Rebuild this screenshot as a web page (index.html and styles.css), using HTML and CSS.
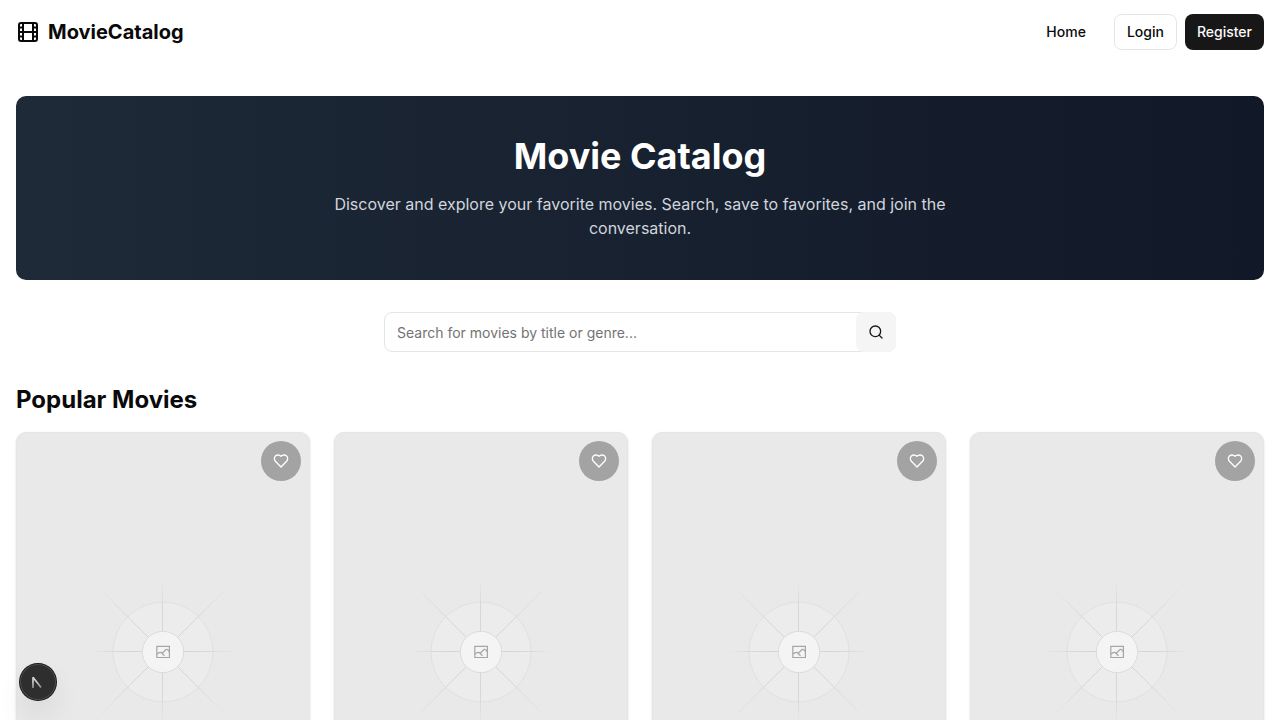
FILE: index.html
```
<!DOCTYPE html>
<html lang="en">
<head>
<meta charset="utf-8">
<meta name="viewport" content="width=device-width, initial-scale=1">
<title>MovieCatalog</title>
<link rel="stylesheet" href="styles.css">
</head>
<body>
<svg class="defs" width="0" height="0" aria-hidden="true">
  <defs>
    <radialGradient id="ray" gradientUnits="userSpaceOnUse" cx="80" cy="80" r="100">
      <stop offset="0" stop-color="#d4d4d4"/>
      <stop offset="0.5" stop-color="#d8d8d8"/>
      <stop offset="1" stop-color="#e9e9e9"/>
    </radialGradient>
    <radialGradient id="ray-straight" gradientUnits="userSpaceOnUse" cx="80" cy="80" r="72">
      <stop offset="0" stop-color="#d4d4d4"/>
      <stop offset="0.65" stop-color="#d8d8d8"/>
      <stop offset="1" stop-color="#e9e9e9"/>
    </radialGradient>
  </defs>
  <symbol id="poster" viewBox="0 0 160 160">
    <circle cx="80" cy="80" r="50" fill="#ececec" stroke="#e1e1e1"/>
    <path d="M10 79.500H150M79.500 10V150" stroke="url(#ray-straight)" fill="none"/>
    <path d="M11 11L149 149M149 11L11 149" stroke="url(#ray)" fill="none"/>
    <circle cx="80" cy="80" r="20.7" fill="#f4f4f4" stroke="#dcdcdc"/>
    <g fill="none" stroke="#a6a6a6" stroke-width="1.2">
      <path d="M73.8 74.300H86.400V85.500H73.800Z"/>
      <path d="M74 82.100C75.800 79.800 78 80.300 79 80.700M77.800 80.300L81.500 83.800M79 81.500L83 77.600C84 77 85.500 77.900 86.200 79.900"/>
    </g>
  </symbol>
  <symbol id="heart" viewBox="0 0 24 24">
    <path d="M19 14c1.49-1.46 3-3.21 3-5.5A5.5 5.5 0 0 0 16.5 3c-1.76 0-3 .5-4.5 2-1.5-1.5-2.74-2-4.5-2A5.5 5.5 0 0 0 2 8.5c0 2.3 1.5 4.05 3 5.5l7 7Z"/>
  </symbol>
</svg>

<header class="header">
  <a class="brand" href="#">
    <svg class="icon icon-lg" viewBox="0 0 24 24" aria-hidden="true"><rect width="18" height="18" x="3" y="3" rx="2"/><path d="M7 3v18M3 7.5h4M3 12h18M3 16.500h4M17 3v18M17 7.500h4M17 16.500h4"/></svg>
    <span>MovieCatalog</span>
  </a>
  <nav class="nav">
    <a class="nav-link" href="#">Home</a>
    <a class="button button-outline" href="#">Login</a>
    <a class="button button-primary" href="#">Register</a>
  </nav>
</header>

<main class="main">
  <section class="hero">
    <h1 class="hero-title">Movie Catalog</h1>
    <p class="hero-text">Discover and explore your favorite movies. Search, save to favorites, and join the conversation.</p>
  </section>

  <form class="search" role="search">
    <input class="search-input" type="search" aria-label="Search movies" placeholder="Search for movies by title or genre...">
    <button class="search-button" type="button" aria-label="Search">
      <svg class="icon" viewBox="0 0 24 24" aria-hidden="true"><circle cx="11" cy="11" r="8"/><path d="m21 21-4.300-4.300"/></svg>
    </button>
  </form>

  <section class="popular">
    <h2 class="section-title">Popular Movies</h2>
    <div class="grid">
      <article class="card">
        <svg class="poster" aria-hidden="true"><use href="#poster"/></svg>
        <button class="favorite" type="button" aria-label="Add to favorites"><svg class="icon" aria-hidden="true"><use href="#heart"/></svg></button>
      </article>
      <article class="card">
        <svg class="poster" aria-hidden="true"><use href="#poster"/></svg>
        <button class="favorite" type="button" aria-label="Add to favorites"><svg class="icon" aria-hidden="true"><use href="#heart"/></svg></button>
      </article>
      <article class="card">
        <svg class="poster" aria-hidden="true"><use href="#poster"/></svg>
        <button class="favorite" type="button" aria-label="Add to favorites"><svg class="icon" aria-hidden="true"><use href="#heart"/></svg></button>
      </article>
      <article class="card">
        <svg class="poster" aria-hidden="true"><use href="#poster"/></svg>
        <button class="favorite" type="button" aria-label="Add to favorites"><svg class="icon" aria-hidden="true"><use href="#heart"/></svg></button>
      </article>
    </div>
  </section>
</main>

<button class="dev-button" type="button" aria-label="Open developer tools">
  <svg class="dev-icon" viewBox="0 0 36 36" aria-hidden="true">
    <defs><linearGradient id="fade" x1="0" y1="0" x2="0" y2="1"><stop offset="0.4" stop-color="#d0d0d0"/><stop offset="1" stop-color="#888"/></linearGradient></defs>
    <path d="M13 24V13.200L21 23.500" fill="none" stroke="url(#fade)" stroke-width="1.700" stroke-linejoin="bevel"/>
  </svg>
</button>
</body>
</html>
```
FILE: styles.css
```
* {
  box-sizing: border-box;
}

html {
  scrollbar-width: none;
}

body {
  margin: 0;
  background: #fff;
  color: #0a0a0a;
  font: 16px/24px Inter, sans-serif;
}

h1, h2, p {
  margin: 0;
}

a {
  color: inherit;
  text-decoration: none;
}

button {
  padding: 0;
  border: 0;
  cursor: pointer;
}

.defs {
  position: absolute;
}

.icon {
  width: 16px;
  height: 16px;
  fill: none;
  stroke: currentColor;
  stroke-width: 2;
  stroke-linecap: round;
  stroke-linejoin: round;
}

.icon-lg {
  width: 24px;
  height: 24px;
}

.header {
  display: flex;
  align-items: center;
  justify-content: space-between;
  height: 64px;
  padding: 0 16px;
}

.brand {
  display: flex;
  align-items: center;
  gap: 8px;
  font-size: 20px;
  line-height: 28px;
  font-weight: 700;
}

.nav {
  display: flex;
  align-items: center;
  gap: 8px;
  font-size: 14px;
  line-height: 20px;
  font-weight: 500;
}

.nav-link {
  padding: 8px 20px;
}

.button {
  display: flex;
  align-items: center;
  height: 36px;
  padding: 0 12px;
  border-radius: 8px;
}

.button-outline {
  border: 1px solid #e5e5e5;
}

.button-primary {
  background: #171717;
  color: #fafafa;
}

.main {
  display: flex;
  flex-direction: column;
  gap: 32px;
  padding: 32px 16px;
}

.hero {
  display: flex;
  flex-direction: column;
  align-items: center;
  gap: 16px;
  padding: 40px 16px;
  border-radius: 10px;
  background: linear-gradient(to right, #1e2a38, #111827);
  text-align: center;
}

.hero-title {
  color: #fff;
  font-size: 36px;
  line-height: 40px;
  font-weight: 700;
}

.hero-text {
  max-width: 672px;
  color: #d1d5dc;
}

.search {
  display: flex;
  width: 100%;
  max-width: 512px;
  margin: 0 auto;
  position: relative;
}

.search-input {
  width: 100%;
  height: 40px;
  padding: 0 52px 0 12px;
  border: 1px solid #e5e5e5;
  border-radius: 8px;
  background: #fff;
  color: inherit;
  font: 14px/20px Inter, sans-serif;
  appearance: none;
}

.search-input::placeholder {
  color: #737373;
}

.search-button {
  position: absolute;
  top: 0;
  right: 0;
  display: grid;
  place-items: center;
  width: 40px;
  height: 40px;
  border-radius: 8px;
  background: #f5f5f5;
  color: #171717;
}

.popular {
  display: flex;
  flex-direction: column;
  gap: 16px;
}

.section-title {
  font-size: 24px;
  line-height: 32px;
  font-weight: 700;
}

.grid {
  display: grid;
  grid-template-columns: repeat(4, 1fr);
  gap: 24px;
}

.card {
  position: relative;
  box-sizing: content-box;
  display: grid;
  place-items: center;
  aspect-ratio: 2 / 3;
  border: 1px solid #e6e6e6;
  border-radius: 10px;
  background: #e9e9e9;
  box-shadow: 0 1px 3px rgba(0, 0, 0, 0.1), 0 1px 2px -1px rgba(0, 0, 0, 0.1);
}

.poster {
  width: 160px;
  height: 160px;
}

.favorite {
  position: absolute;
  top: 8px;
  right: 8px;
  display: grid;
  place-items: center;
  width: 40px;
  height: 40px;
  border-radius: 50%;
  background: #a3a3a3;
  color: #fff;
}

.dev-button {
  position: fixed;
  left: 20px;
  bottom: 20px;
  width: 36px;
  height: 36px;
  border-radius: 50%;
  background: #2e2e2e;
  box-shadow: 0 0 0 1px #171717, inset 0 0 0 1px #4a4a4a, 0 16px 32px -8px rgba(0, 0, 0, 0.24);
}

.dev-icon {
  display: block;
  width: 36px;
  height: 36px;
}
```
